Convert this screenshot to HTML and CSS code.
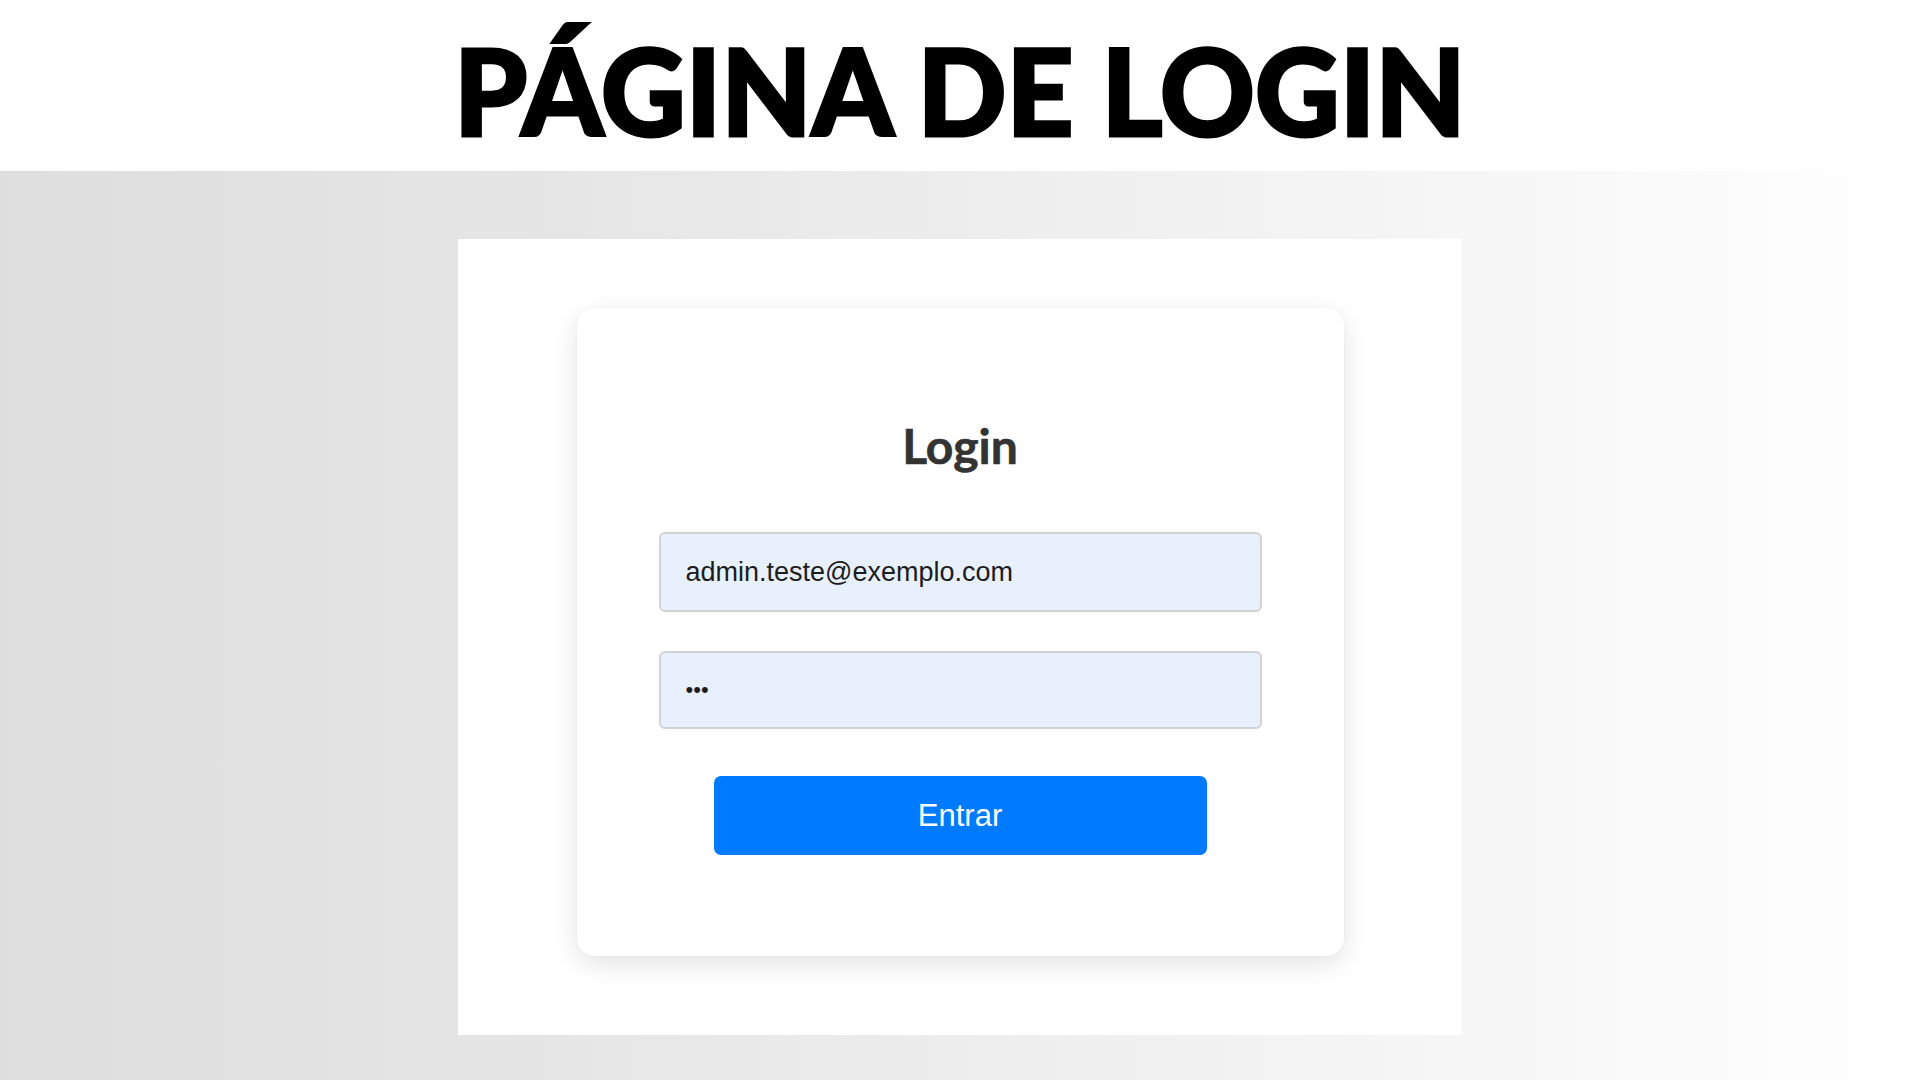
FILE: index.html
```html
<!DOCTYPE html>
<html lang="pt-BR">
<head>
<meta charset="utf-8">
<title>Página de Login</title>
<link rel="stylesheet" href="styles.css">
</head>
<body>
  <header class="top">
    <h1 class="title">PÁGINA DE LOGIN</h1>
  </header>
  <main class="stage">
    <section class="panel">
      <form class="card">
        <h2 class="card-title">Login</h2>
        <input class="field" type="email" value="admin.teste@exemplo.com">
        <input class="field field-pass" type="password" value="123">
        <button class="btn" type="button">Entrar</button>
      </form>
    </section>
  </main>
</body>
</html>
```
FILE: styles.css
```css
html, body {
  margin: 0;
  padding: 0;
}
body {
  width: 1920px;
  height: 1080px;
  overflow: hidden;
  background: #ffffff;
  font-family: "Liberation Sans", Arial, sans-serif;
}
.top {
  height: 171px;
  box-sizing: border-box;
  padding-top: 30px;
  display: flex;
  justify-content: center;
  background: #ffffff;
}
.title {
  margin: 0;
  font-family: "Lato", sans-serif;
  font-weight: 900;
  font-size: 120px;
  line-height: 120px;
  color: #000000;
  letter-spacing: 0;
  -webkit-text-stroke: 3px #000000;
  transform: scaleX(0.975);
  white-space: nowrap;
}
.stage {
  height: 909px;
  box-sizing: border-box;
  padding-top: 68px;
  display: flex;
  justify-content: center;
  align-items: flex-start;
  background: linear-gradient(to right, #dedede 0%, #e6e6e6 30%, #f2f2f2 65%, #ffffff 100%);
}
.panel {
  width: 1004px;
  height: 796px;
  box-sizing: border-box;
  padding-top: 69px;
  display: flex;
  justify-content: center;
  align-items: flex-start;
  background: #ffffff;
}
.card {
  width: 767px;
  box-sizing: border-box;
  padding: 109px 82px 101px;
  display: flex;
  flex-direction: column;
  align-items: center;
  background: #ffffff;
  border-radius: 18px;
  box-shadow: 0 8px 26px rgba(0, 0, 0, 0.11), 0 0 3px rgba(0, 0, 0, 0.04);
}
.card-title {
  margin: 0 0 57px;
  font-family: "Lato", sans-serif;
  font-weight: 700;
  font-size: 48px;
  line-height: 58px;
  color: #333333;
  -webkit-text-stroke: 0.6px #333333;
}
.field {
  width: 100%;
  height: 80px;
  box-sizing: border-box;
  margin: 0;
  padding: 0 25px;
  border: 2px solid #d2d2d2;
  border-radius: 6px;
  background: #e8f0fe;
  font-family: "Liberation Sans", Arial, sans-serif;
  font-size: 27px;
  color: #1c1c1c;
  outline: none;
}
.field-pass {
  margin-top: 39px;
  height: 78px;
  font-size: 22px;
  letter-spacing: 0;
}
.btn {
  margin-top: 47px;
  width: 493px;
  height: 79px;
  border: none;
  border-radius: 7px;
  background: #007bff;
  color: #ffffff;
  font-family: "Liberation Sans", Arial, sans-serif;
  font-size: 31px;
  cursor: pointer;
}
```
